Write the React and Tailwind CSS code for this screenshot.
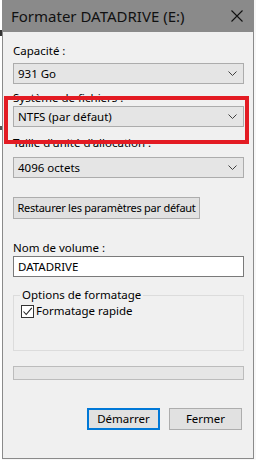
import React from "react";

const Chevron = () => (
  <svg width="9" height="5" viewBox="0 0 9 5" className="shrink-0">
    <path d="M0.5 0.5 L4.5 4.5 L8.5 0.5" fill="none" stroke="#404040" strokeWidth="1" />
  </svg>
);

const Select = ({ value, className = "" }) => (
  <div
    className={`flex items-center justify-between h-[21px] w-[231px] border border-[#acacac] bg-[#e5e5e5] pl-[4px] pr-[6px] ${className}`}
  >
    <span className="text-[11.5px] leading-[16px] text-black whitespace-nowrap">{value}</span>
    <Chevron />
  </div>
);

const Label = ({ children, className = "" }) => (
  <div className={`text-[11.5px] leading-[16px] text-black whitespace-nowrap ${className}`}>{children}</div>
);

export default function App() {
  return (
    <div
      className="w-[256px] h-[460px] bg-[#f7f7f7] flex overflow-hidden"
      style={{ fontFamily: '"Noto Sans", sans-serif' }}
    >
      {/* background sliver */}
      <div className="w-[2px] h-full bg-white flex flex-col">
        <div className="h-[30px]" />
        <div className="h-[6px] bg-[#333]" />
        <div className="h-[90px]" />
        <div className="h-[4px] bg-[#555]" />
        <div className="h-[300px]" />
      </div>

      {/* window */}
      <div className="relative w-[252px] h-[459px] border border-[#8a8a8a] border-t-0 flex flex-col bg-[#f0f0f0]">
        {/* title bar */}
        <div className="h-[32px] bg-[#8a8a8a] flex items-center justify-between pl-[8px] pr-[10px] shrink-0">
          <span className="text-[15px] leading-[20px] text-[#111] whitespace-nowrap">Formater DATADRIVE (E:)</span>
          <svg width="12" height="12" viewBox="0 0 12 12">
            <path d="M0.5 0.5 L11.5 11.5 M11.5 0.5 L0.5 11.5" stroke="#111" strokeWidth="1.1" />
          </svg>
        </div>

        <div className="flex flex-col pl-[10px]">
          <Label className="mt-[11px]">Capacité :</Label>
          <Select value="931 Go" className="mt-[4px]" />

          <Label className="mt-[6px]">Système de fichiers :</Label>
          <Select value="NTFS (par défaut)" className="mt-0" />

          <Label className="mt-[8px]">Taille d'unité d'allocation :</Label>
          <Select value="4096 octets" className="mt-[6px]" />

          <div className="mt-[19px] h-[22px] w-[187px] border border-[#adadad] bg-[#e1e1e1] flex items-center justify-center">
            <span className="text-[11px] tracking-[-0.25px] leading-[16px] text-black whitespace-nowrap">
              Restaurer les paramètres par défaut
            </span>
          </div>

          <Label className="mt-[21px]">Nom de volume :</Label>
          <div className="mt-0 h-[21px] w-[231px] border border-[#7a7a7a] bg-white flex items-center pl-[4px]">
            <span className="text-[11.5px] leading-[16px] text-black">DATADRIVE</span>
          </div>

          {/* group box */}
          <div className="relative mt-[18px] h-[56px] w-[231px] border border-[#dcdcdc]">
            <span className="absolute -top-[9px] left-[6px] bg-[#f0f0f0] px-[2px] text-[11.5px] leading-[16px] text-black whitespace-nowrap">
              Options de formatage
            </span>
            <div className="flex items-center mt-[7px] ml-[7px] gap-[2px]">
              <div className="w-[13px] h-[13px] border border-[#333] bg-white flex items-center justify-center">
                <svg width="11" height="11" viewBox="0 0 11 11">
                  <path d="M1.5 5.5 L4.2 8.5 L9.8 1.8" fill="none" stroke="#222" strokeWidth="1.1" />
                </svg>
              </div>
              <span className="text-[11.5px] leading-[16px] text-black">Formatage rapide</span>
            </div>
          </div>

          {/* progress bar */}
          <div className="mt-[15px] h-[14px] w-[231px] border border-[#bcbcbc] bg-[#e6e6e6]" />

          <div className="mt-[28px] flex w-[231px] justify-end gap-[9px] pr-[2px]">
            <div className="h-[22px] w-[73px] border-2 border-[#0078d7] bg-[#e1e1e1] flex items-center justify-center">
              <span className="text-[11.5px] leading-[16px] text-black">Démarrer</span>
            </div>
            <div className="h-[22px] w-[73px] border border-[#adadad] bg-[#e1e1e1] flex items-center justify-center">
              <span className="text-[11.5px] leading-[16px] text-black">Fermer</span>
            </div>
          </div>
        </div>

        {/* red highlight */}
        <div className="absolute left-[1px] top-[96px] w-[245px] h-[48px] border-[4px] border-[#e31b23]" />
      </div>
    </div>
  );
}
